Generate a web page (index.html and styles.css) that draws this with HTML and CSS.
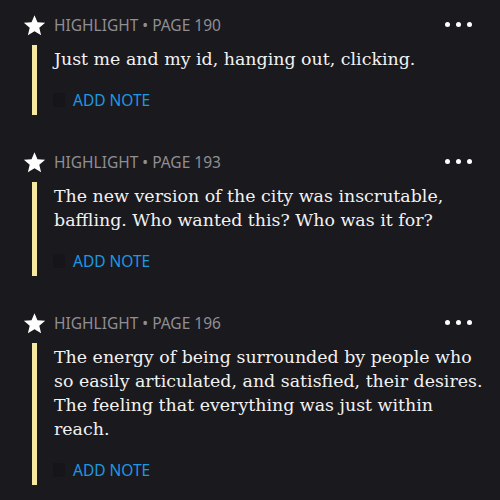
FILE: index.html
```html
<!DOCTYPE html>
<html>
<head>
<meta charset="utf-8">
<link rel="stylesheet" href="styles.css">
</head>
<body>
<main class="list">
  <section class="item">
    <div class="head">
      <svg class="star" viewBox="0 0 24 24" width="23" height="23"><path d="M12 1.2l3.1 7.4 8 .6-6.1 5.2 1.9 7.9L12 18.1l-6.9 4.2 1.9-7.9L.9 9.2l8-.6z" fill="#fff"/></svg>
      <span class="meta">HIGHLIGHT • PAGE 190</span>
      <span class="dots"><i></i><i></i><i></i></span>
    </div>
    <div class="body">
      <p class="quote">Just me and my id, hanging out, clicking.</p>
      <div class="note"><span class="box"></span><span class="add">ADD NOTE</span></div>
    </div>
  </section>
  <section class="item">
    <div class="head">
      <svg class="star" viewBox="0 0 24 24" width="23" height="23"><path d="M12 1.2l3.1 7.4 8 .6-6.1 5.2 1.9 7.9L12 18.1l-6.9 4.2 1.9-7.9L.9 9.2l8-.6z" fill="#fff"/></svg>
      <span class="meta">HIGHLIGHT • PAGE 193</span>
      <span class="dots"><i></i><i></i><i></i></span>
    </div>
    <div class="body">
      <p class="quote">The new version of the city was inscrutable, baffling. Who wanted this? Who was it for?</p>
      <div class="note"><span class="box"></span><span class="add">ADD NOTE</span></div>
    </div>
  </section>
  <section class="item">
    <div class="head">
      <svg class="star" viewBox="0 0 24 24" width="23" height="23"><path d="M12 1.2l3.1 7.4 8 .6-6.1 5.2 1.9 7.9L12 18.1l-6.9 4.2 1.9-7.9L.9 9.2l8-.6z" fill="#fff"/></svg>
      <span class="meta">HIGHLIGHT • PAGE 196</span>
      <span class="dots"><i></i><i></i><i></i></span>
    </div>
    <div class="body">
      <p class="quote">The energy of being surrounded by people who so easily articulated, and satisfied, their desires. The feeling that everything was just within reach.</p>
      <div class="note"><span class="box"></span><span class="add">ADD NOTE</span></div>
    </div>
  </section>
</main>
</body>
</html>
```
FILE: styles.css
```css
html, body {
  margin: 0;
  padding: 0;
  background: #1a191e;
  height: 100%;
}
.list {
  display: flex;
  flex-direction: column;
  gap: 34px;
  padding: 12px 16px 0 23px;
}
.item {
  display: flex;
  flex-direction: column;
  gap: 9px;
}
.head {
  display: flex;
  align-items: center;
  height: 24px;
  margin-right: 12px;
}
.star {
  display: block;
  flex: none;
  margin-right: 8px;
  margin-top: 2px;
}
.meta {
  font-family: "Noto Sans", sans-serif;
  font-size: 15.5px;
  color: #8f8e93;
  flex: 1;
  padding-top: 1px;
}
.dots {
  display: flex;
  gap: 6px;
}
.dots i {
  width: 5px;
  height: 5px;
  border-radius: 50%;
  background: #fff;
  display: block;
}
.body {
  margin-left: 9px;
  border-left: 5px solid #f6e8a0;
  padding: 2px 0 0 17px;
}
.quote {
  margin: 0;
  font-family: "DejaVu Serif", serif;
  font-size: 17.4px;
  line-height: 24px;
  color: #f2f2f2;
}
.note {
  margin-top: 14px;
  height: 30px;
  display: flex;
  align-items: center;
}
.box {
  width: 12px;
  height: 14px;
  background: #16151a;
  margin-left: -1px;
  margin-right: 8px;
}
.add {
  font-family: "Noto Sans", sans-serif;
  font-size: 15.5px;
  color: #1d98e3;
}
```
